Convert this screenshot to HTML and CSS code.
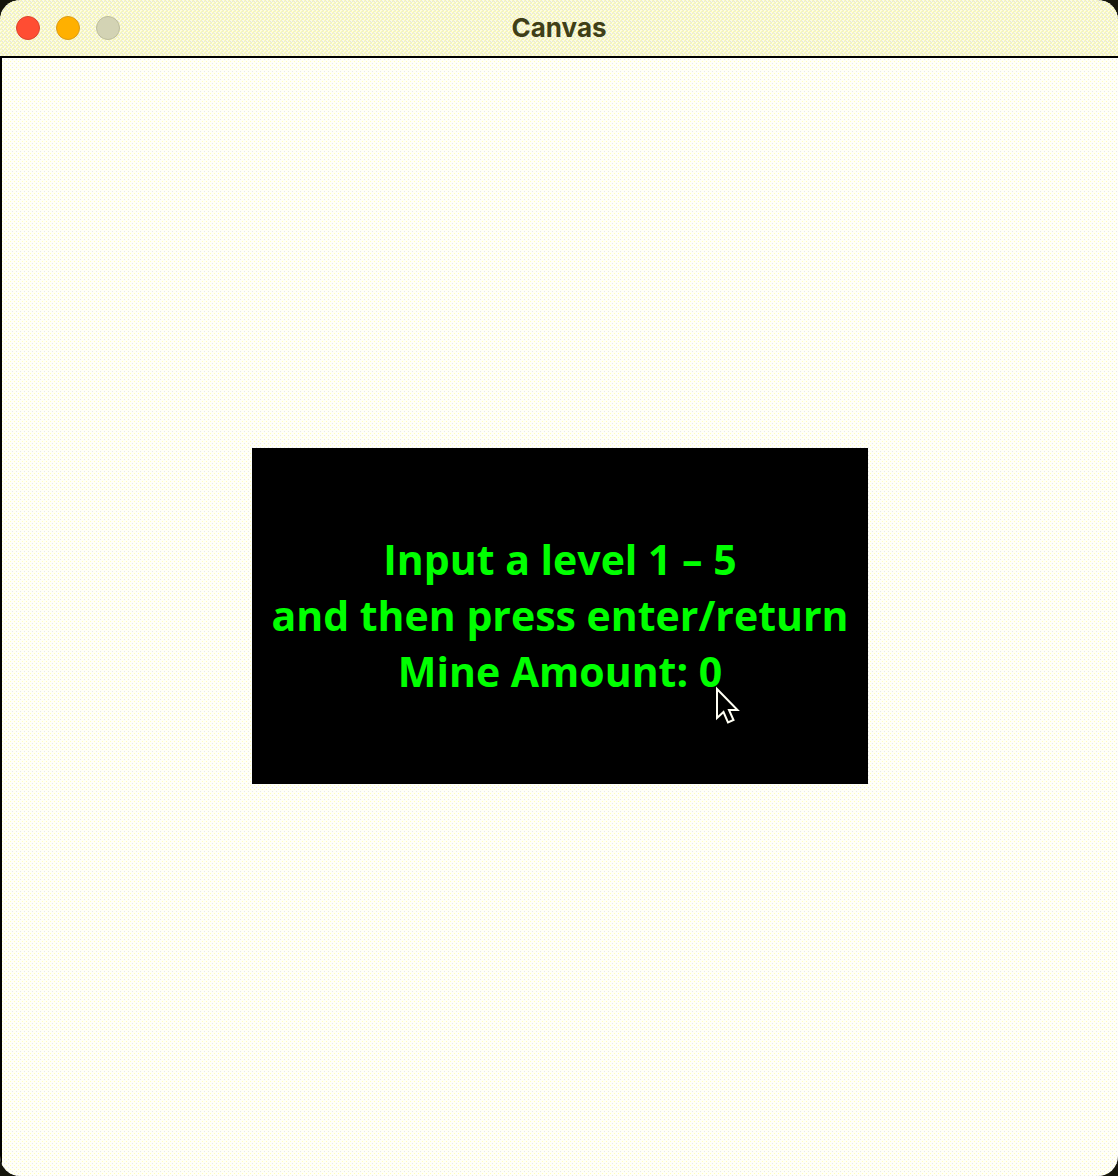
FILE: index.html
```html
<!DOCTYPE html>
<html lang="en">
<head>
<meta charset="utf-8">
<meta name="viewport" content="width=device-width, initial-scale=1">
<title>Canvas</title>
<link rel="stylesheet" href="styles.css">
</head>
<body>
<div class="window">
  <header class="titlebar">
    <div class="controls">
      <button class="control close" type="button" aria-label="Close"></button>
      <button class="control minimize" type="button" aria-label="Minimize"></button>
      <button class="control zoom" type="button" aria-label="Zoom" disabled></button>
    </div>
    <h1 class="title">Canvas</h1>
  </header>
  <main class="canvas">
    <section class="prompt">
      <p class="line">Input a level 1 – 5</p>
      <p class="line">and then press enter/return</p>
      <p class="line">Mine Amount: 0</p>
      <svg class="pointer" width="26" height="40" viewBox="0 0 26 40" aria-hidden="true">
        <path d="M2 3V32L8.500 26L13 36.500L18.500 34L14 24H22.500Z" fill="#000" stroke="#fffff4" stroke-width="2"/>
      </svg>
    </section>
  </main>
</div>
</body>
</html>
```
FILE: styles.css
```css
* {
  box-sizing: border-box;
}

body {
  margin: 0;
  background: #15150c;
}

.window {
  display: flex;
  flex-direction: column;
  min-height: 100vh;
  border-radius: 20px;
  overflow: hidden;
  background: #000;
}

/* The window fills are dithered with a 4px vector tile. */
.titlebar {
  display: grid;
  grid-template-columns: 1fr auto 1fr;
  align-items: center;
  height: 58px;
  padding: 0 16px;
  border-bottom: 2px solid #000;
  background: #fcfce4 url("data:image/svg+xml,%3Csvg xmlns='http://www.w3.org/2000/svg' width='4' height='4' shape-rendering='crispEdges'%3E%3Cpath fill='%23ffffb0' d='M0 0h1v1H0zM2 2h1v1H2zM1 1h1v1H1zM3 3h1v1H3zM1 3h1v1H1z'/%3E%3Cpath fill='%23e6e6dc' d='M1 0h1v1H1zM0 1h1v1H0zM2 1h1v1H2zM3 2h1v1H3zM2 3h1v1H2z'/%3E%3C/svg%3E") 0 0 / 4px 4px;
}

.controls {
  display: flex;
  gap: 16px;
}

.control {
  width: 24px;
  height: 24px;
  padding: 0;
  border: 1px solid;
  border-radius: 50%;
}

.close {
  background: #ff4d33;
  border-color: #d9432f;
}

.minimize {
  background: #ffb000;
  border-color: #d99a18;
}

.zoom {
  background: #d3d3b4;
  border-color: #bcbc9c;
}

.title {
  margin: 0;
  color: #3f3f18;
  font: 700 26px/32px Inter, sans-serif;
}

.canvas {
  flex: 1;
  display: flex;
  align-items: center;
  justify-content: center;
  padding-bottom: 2px;
  border-left: 2px solid #000;
  background: #fffff8 url("data:image/svg+xml,%3Csvg xmlns='http://www.w3.org/2000/svg' width='4' height='4' shape-rendering='crispEdges'%3E%3Cpath fill='%23ffffb8' d='M0 3h1v1H0z'/%3E%3Cpath fill='%23e8e8e8' d='M2 1h1v1H2z'/%3E%3C/svg%3E") 0 0 / 4px 4px;
}

.prompt {
  position: relative;
  width: 616px;
  max-width: 100%;
  padding: 83px 0 85px;
  background: #000;
  color: #00ff00;
  text-align: center;
}

.line {
  margin: 0;
  font: 700 41px/56px "Open Sans", "Noto Sans", sans-serif;
}

.pointer {
  position: absolute;
  left: 463px;
  top: 238px;
}
```
